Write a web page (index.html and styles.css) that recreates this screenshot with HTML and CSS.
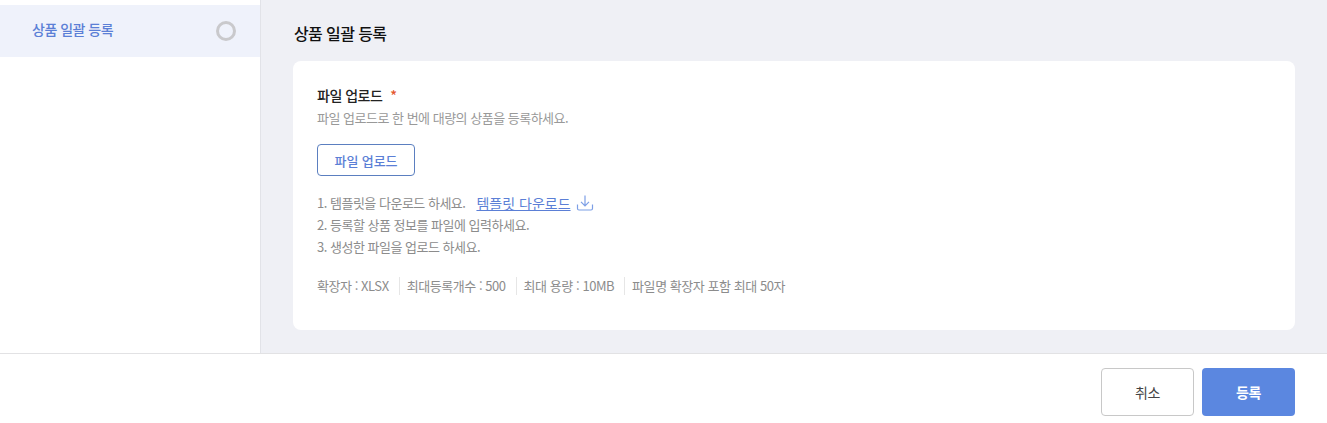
FILE: index.html
```html
<!DOCTYPE html>
<html lang="ko">
<head>
<meta charset="utf-8">
<title>상품 일괄 등록</title>
<link rel="stylesheet" href="styles.css">
</head>
<body>
<div class="top">
  <aside class="side">
    <div class="step">
      <span class="step-name">상품 일괄 등록</span>
      <span class="ring"></span>
    </div>
  </aside>
  <main class="main">
    <h1 class="title">상품 일괄 등록</h1>
    <section class="card">
      <div class="label">파일 업로드<span class="req">*</span></div>
      <p class="desc">파일 업로드로 한 번에 대량의 상품을 등록하세요.</p>
      <button class="upload">파일 업로드</button>
      <ol class="steps">
        <li>1. 템플릿을 다운로드 하세요.<a class="tpl">템플릿 다운로드</a><svg class="dl" width="18" height="18" viewBox="0 0 18 18" fill="none" stroke="#7d9fe6" stroke-width="1.2"><path d="M9 1.5V11.5M5 7.8L9 11.8L13 7.8"/><path d="M1.5 10.5V14.5Q1.5 16 3 16H15Q16.5 16 16.5 14.5V10.5"/></svg></li>
        <li>2. 등록할 상품 정보를 파일에 입력하세요.</li>
        <li>3. 생성한 파일을 업로드 하세요.</li>
      </ol>
      <div class="specs">
        <span>확장자 : XLSX</span>
        <span>최대등록개수 : 500</span>
        <span>최대 용량 : 10MB</span>
        <span>파일명 확장자 포함 최대 50자</span>
      </div>
    </section>
  </main>
</div>
<footer class="foot">
  <button class="btn cancel">취소</button>
  <button class="btn submit">등록</button>
</footer>
</body>
</html>
```
FILE: styles.css
```css
* { box-sizing: border-box; }
html, body { margin: 0; padding: 0; }
body {
  width: 1327px;
  height: 423px;
  overflow: hidden;
  background: #fff;
  font-family: "Noto Sans CJK KR", "Noto Sans", sans-serif;
  letter-spacing: -0.5px;
  display: flex;
  flex-direction: column;
}
.top { display: flex; height: 354px; border-bottom: 1px solid #e2e2e4; }
.side { width: 261px; background: #fff; border-right: 1px solid #e2e3e8; padding-top: 5px; }
.step {
  height: 52px;
  background: #eff2fb;
  display: flex;
  align-items: center;
  justify-content: space-between;
  padding: 0 24px 0 32px;
}
.step-name { font-size: 14px; font-weight: 500; color: #5b7fd6; position: relative; top: -2px; }
.ring { width: 20px; height: 20px; border: 3px solid #c9c9cc; border-radius: 50%; }
.main { flex: 1; background: #eff0f5; padding: 0 32px 0 32px; }
.title { margin: 21px 0 16px 1px; font-size: 16px; line-height: 24px; font-weight: 500; color: #111; letter-spacing: -0.6px; }
.card { background: #fff; border-radius: 8px; height: 269px; padding: 24px; }
.label { font-size: 14px; line-height: 20px; font-weight: 500; color: #222; }
.req { color: #e4572e; margin-left: 8px; }
.desc { margin: 4px 0 0; font-size: 13px; line-height: 18px; color: #999; }
.upload {
  display: block;
  margin-top: 17px;
  width: 98px;
  height: 32px;
  padding: 0;
  background: #fff;
  border: 1px solid #5b7fc0;
  border-radius: 4px;
  font: 500 13px "Noto Sans CJK KR", sans-serif;
  letter-spacing: -0.1px;
  color: #5b7fd6;
}
.steps { list-style: none; margin: 16px 0 0; padding: 0; font-size: 13px; line-height: 22px; color: #8c8c8c; }
.steps li { display: flex; align-items: center; }
.tpl { margin-left: 11px; font-size: 14px; letter-spacing: 0; color: #5b7fd6; text-decoration: underline; }
.dl { margin-left: 5px; }
.specs { display: flex; margin-top: 19px; font-size: 13px; line-height: 18px; letter-spacing: -0.45px; color: #8c8c8c; }
.specs span + span { margin-left: 10px; padding-left: 7px; border-left: 1px solid #e6e6e6; }
.foot { flex: 1; display: flex; justify-content: flex-end; gap: 8px; padding: 14px 32px 0 0; }
.btn { width: 93px; height: 48px; border-radius: 4px; font: 400 14px "Noto Sans CJK KR", sans-serif; letter-spacing: -0.5px; }
.cancel { background: #fff; border: 1px solid #c8c8c8; color: #444; }
.submit { background: #5b87e0; border: 0; color: #fff; font-weight: 700; }
```
